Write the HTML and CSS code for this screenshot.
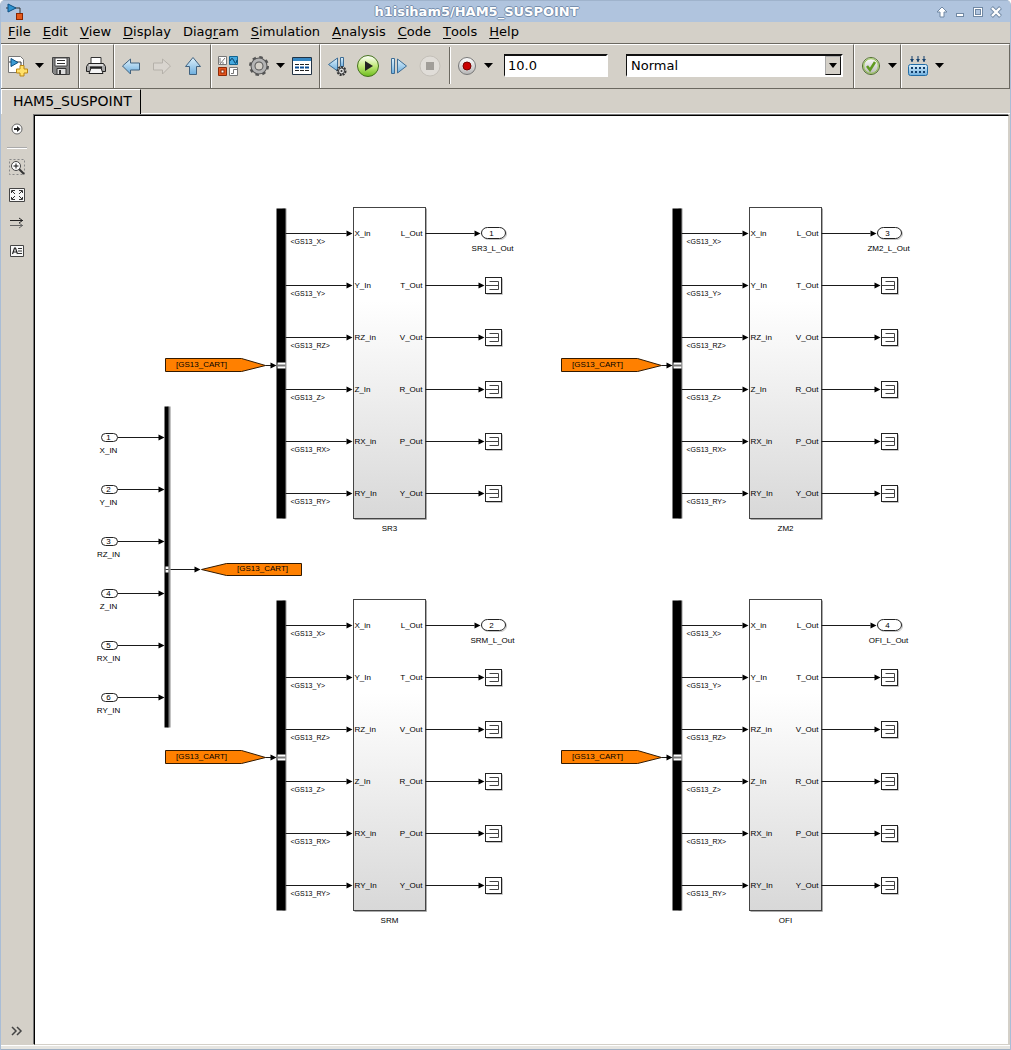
FILE: index.html
```html
<!DOCTYPE html>
<html lang="en">
<head>
<meta charset="utf-8">
<title>h1isiham5/HAM5_SUSPOINT</title>
<link rel="stylesheet" href="styles.css">
</head>
<body>
<div class="window">
  <header class="titlebar">
    <svg class="app-icon" width="18" height="18" viewBox="0 0 18 18" aria-hidden="true">
      <path d="M0 5h2M9 5h5v5" fill="none" stroke="#333"/>
      <path d="M2 1l8 4-8 4z" fill="#2f93d0" stroke="#0c4f82"/>
      <rect x="10.500" y="10.500" width="6" height="6" fill="#e35a1c" stroke="#8c2600"/>
    </svg>
    <h1 class="title">h1isiham5/HAM5_SUSPOINT</h1>
    <div class="controls">
      <button aria-label="Shade"><svg width="12" height="12" viewBox="0 0 12 12"><path d="M6 1l5 5H8v5H4V6H1z" fill="#fff" stroke="#7088a4"/></svg></button>
      <button aria-label="Minimize"><svg width="12" height="12" viewBox="0 0 12 12"><rect x="2.500" y="7.500" width="7" height="3" fill="#fff" stroke="#7088a4"/></svg></button>
      <button aria-label="Maximize"><svg width="12" height="12" viewBox="0 0 12 12"><rect x="1.500" y="1.500" width="9" height="9" fill="#fff" stroke="#7088a4"/><rect x="3.500" y="3.500" width="5" height="5" fill="#b0c4de" stroke="#7088a4"/></svg></button>
      <button aria-label="Close"><svg width="12" height="12" viewBox="0 0 12 12"><path d="M1.500 1.500l9 9M10.500 1.500l-9 9" stroke="#7088a4" stroke-width="4"/><path d="M2 2l8 8M10 2l-8 8" stroke="#fff" stroke-width="2.400"/></svg></button>
    </div>
  </header>

  <nav class="menubar">
    <button><u>F</u>ile</button>
    <button><u>E</u>dit</button>
    <button><u>V</u>iew</button>
    <button><u>D</u>isplay</button>
    <button>Diag<u>r</u>am</button>
    <button><u>S</u>imulation</button>
    <button><u>A</u>nalysis</button>
    <button><u>C</u>ode</button>
    <button><u>T</u>ools</button>
    <button><u>H</u>elp</button>
  </nav>

  <svg class="defs" width="0" height="0" aria-hidden="true">
    <defs>
      <linearGradient id="blue" x1="0" y1="0" x2="0" y2="1"><stop offset="0" stop-color="#dff1fb"/><stop offset="1" stop-color="#6daede"/></linearGradient>
      <linearGradient id="gray" x1="0" y1="0" x2="0" y2="1"><stop offset="0" stop-color="#fff"/><stop offset="1" stop-color="#b5b5b5"/></linearGradient>
      <linearGradient id="green" x1="0" y1="0" x2="0" y2="1"><stop offset="0" stop-color="#fff"/><stop offset=".5" stop-color="#c3ea7c"/><stop offset="1" stop-color="#6cbc1b"/></linearGradient>
      <linearGradient id="block" x1="0" y1="0" x2="0" y2="1"><stop offset="0" stop-color="#fff"/><stop offset=".3" stop-color="#fff"/><stop offset="1" stop-color="#d8d8d8"/></linearGradient>
      <path id="down" d="M1 1h9l-4.500 5z"/>
      <path id="head" d="M0 0l-6-3v6z"/>
      <g id="wires">
        <rect x="5" y="0" width="4" height="310" fill="#999"/>
        <rect x="-1" y="0" width="9" height="310"/>
        <path d="M0 154h8v6h-8z" fill="#fff"/><path d="M0 157h8" stroke="#777" stroke-width="2"/>
        <path d="M77 311h72V0" fill="none" stroke="#aaa"/>
        <rect x="76" y="-1" width="72" height="311" fill="url(#block)" stroke="#444"/>
        <path d="M8 25h61M8 77h61M8 129h61M8 181h61M8 233h61M8 285h61M-12 157h6M148 25h49M148 77h54M148 129h54M148 181h54M148 233h54M148 285h54" stroke="#1a1a1a"/>
        <use href="#head" x="75" y="25"/><use href="#head" x="75" y="77"/><use href="#head" x="75" y="129"/><use href="#head" x="75" y="181"/><use href="#head" x="75" y="233"/><use href="#head" x="75" y="285"/>
        <use href="#head" x="-1" y="157"/><use href="#head" x="203" y="25"/>
        <use href="#term" y="77"/><use href="#term" y="129"/><use href="#term" y="181"/><use href="#term" y="233"/><use href="#term" y="285"/>
        <rect x="205" y="20" width="24" height="11" rx="6" fill="none" stroke="#c4c4c4"/>
        <rect x="204" y="19" width="24" height="11" rx="6" fill="#fff" stroke="#222"/>
        <path d="M-112 150h76l24 7-24 6h-76z" fill="#ff8000" stroke="#331a00"/>
      </g>
      <g id="term">
        <use href="#head" x="207" y="0"/>
        <path d="M209 9h16v-16" fill="none" stroke="#c4c4c4"/>
        <rect x="208" y="-8" width="16" height="16" fill="#fff" stroke="#222"/>
        <path d="M212-4h9v8h-9M208 0h13" fill="none" stroke="#444"/>
      </g>
      <g id="inport">
        <path d="M16 0h42" stroke="#1a1a1a"/><use href="#head" x="63" y="0"/>
        <rect x="0" y="-4" width="16" height="8" rx="4" fill="#fff" stroke="#222"/>
      </g>
    </defs>
  </svg>

  <div class="toolbar" role="toolbar">
    <div class="group">
      <button class="tool" aria-label="New model"><svg width="22" height="22" viewBox="0 0 22 22"><path d="M1.500 1.500h12l3 3v13h-15z" fill="#fff" stroke="#777"/><path d="M2 7h12v3" stroke="#333" fill="none"/><path d="M4 3.500l7 4-7 4z" fill="#3c9bd3" stroke="#0c4f82"/><path d="M13 10.500h4v3.500h3.500v4H17v3h-4v-3H9.500v-4H13z" fill="#ffe069" stroke="#ba8615"/></svg></button>
      <button class="more" aria-label="New options"><svg width="11" height="7"><use href="#down"/></svg></button>
      <button class="tool" aria-label="Save"><svg width="20" height="20" viewBox="0 0 20 20"><path d="M1.500 1.500h17v17h-15l-2-2z" fill="#858585" stroke="#444"/><path d="M4 2h12v8H4z" fill="#fff" stroke="#444"/><path d="M6 4.500h8M6 7.500h8" stroke="#333"/><path d="M6 12.500h9v6H6z" fill="#ddd" stroke="#333"/><path d="M8 14h2v4H8z" fill="#333"/></svg></button>
    </div>
    <div class="group">
      <button class="tool" aria-label="Print"><svg width="22" height="20" viewBox="0 0 22 20"><path d="M6 8V1.500h10V8" fill="#fff" stroke="#333"/><path d="M3.500 7.500h15l2 3v5h-19v-5z" fill="#a9a9a9" stroke="#222"/><path d="M4 9h14" stroke="#ddd" stroke-width="2"/><path d="M6 12h10l2 5.500H4z" fill="#f5f5f5" stroke="#222"/><path d="M5 11.500h12" stroke="#222" stroke-width="2"/></svg></button>
    </div>
    <div class="group">
      <button class="tool" aria-label="Back"><svg width="20" height="18" viewBox="0 0 20 18"><path d="M1.500 9l8-7v4h9v7h-9v4z" fill="url(#blue)" stroke="#41627f"/></svg></button>
      <button class="tool" aria-label="Forward" disabled><svg width="20" height="18" viewBox="0 0 20 18"><path d="M18.500 9l-8-7v4h-9v7h9v4z" fill="#d9d5cf" stroke="#b5b1aa"/></svg></button>
      <button class="tool" aria-label="Up to parent"><svg width="18" height="20" viewBox="0 0 18 20"><path d="M9 1.500l7.500 9h-4v8h-7v-8h-4z" fill="url(#blue)" stroke="#41627f"/></svg></button>
    </div>
    <div class="group">
      <button class="tool" aria-label="Library browser"><svg width="22" height="22" viewBox="0 0 22 22"><path d="M1.500 1.500h8v8h-8zM12.500 12.500h8v8h-8z" fill="#fff" stroke="#777"/><path d="M3 9l5-6M3 3v5M6 7v2M14 18.500h2.500v-4H20" stroke="#777" fill="none"/><path d="M12.500 1.500h8v8h-8z" fill="#45a9df" stroke="#116491"/><path d="M13 6q2-5 4 0t3-1" fill="none" stroke="#063f64"/><path d="M1.500 12.500h8v8h-8z" fill="#e7561f" stroke="#8d2a08"/><rect x="4" y="15" width="3" height="3" fill="#fff" stroke="#8d2a08"/></svg></button>
      <button class="tool" aria-label="Model configuration"><svg width="22" height="22" viewBox="0 0 22 22"><circle cx="11" cy="11" r="8.500" fill="none" stroke="#555" stroke-width="3" stroke-dasharray="3.340"/><circle cx="11" cy="11" r="6" fill="#d4d0c8" stroke="#555" stroke-width="5"/><circle cx="11" cy="11" r="6" fill="none" stroke="#b4b4b4" stroke-width="3"/></svg></button>
      <button class="more" aria-label="Configuration options"><svg width="11" height="7"><use href="#down"/></svg></button>
      <button class="tool" aria-label="Model explorer"><svg width="20" height="18" viewBox="0 0 20 18"><path d="M.500.500h19v17H.500z" fill="#fff" stroke="#234"/><path d="M1 1h18v3H1z" fill="#3586c2"/><path d="M3 7.500h14M3 13.500h14" stroke="#222" stroke-dasharray="4 1"/><path d="M3 10.500h14" stroke="#0a4e96" stroke-width="2" stroke-dasharray="4 1"/></svg></button>
    </div>
    <div class="group">
      <button class="tool" aria-label="Step back"><svg width="20" height="20" viewBox="0 0 20 20"><path d="M10.500 2v13l-9-6.500z" fill="url(#blue)" stroke="#3d6c94"/><path d="M13.500 1.500h3v9h-3z" fill="url(#blue)" stroke="#3d6c94"/><circle cx="14.500" cy="15" r="4" fill="#ddd" stroke="#333" stroke-width="2" stroke-dasharray="2 1"/><circle cx="14.500" cy="15" r="3" fill="#ddd" stroke="#333"/><circle cx="14.500" cy="15" r="1" fill="#333"/></svg></button>
      <button class="tool" aria-label="Run"><svg width="24" height="24" viewBox="0 0 24 24"><circle cx="12" cy="12" r="10.500" fill="url(#green)" stroke="#44721c"/><path d="M9 7l8 5-8 5z" fill="#222"/></svg></button>
      <button class="tool" aria-label="Step forward"><svg width="18" height="18" viewBox="0 0 18 18"><path d="M1.500 1.500h3v15h-3zM7.500 2v14l9-7z" fill="url(#blue)" stroke="#3d6c94"/></svg></button>
      <button class="tool" aria-label="Stop" disabled><svg width="22" height="22" viewBox="0 0 22 22"><circle cx="11" cy="11" r="10" fill="#e0ddd8" stroke="#c4c0b9"/><path d="M7 7h8v8H7z" fill="#a19e99"/></svg></button>
      <span class="divider"></span>
      <button class="tool" aria-label="Record"><svg width="20" height="20" viewBox="0 0 20 20"><circle cx="10" cy="10" r="8.500" fill="url(#gray)" stroke="#777"/><circle cx="10" cy="10" r="4" fill="#c90000" stroke="#700"/></svg></button>
      <button class="more" aria-label="Record options"><svg width="11" height="7"><use href="#down"/></svg></button>
      <input class="stop-time" type="text" value="10.0" aria-label="Stop time">
      <div class="mode">
        <select aria-label="Simulation mode"><option>Normal</option></select>
        <span class="mode-arrow"><svg width="8" height="5" viewBox="0 0 8 5"><path d="M0 0h8l-4 5z"/></svg></span>
      </div>
    </div>
    <div class="group">
      <button class="tool" aria-label="Model advisor"><svg width="20" height="20" viewBox="0 0 20 20"><circle cx="10" cy="10" r="8.500" fill="url(#gray)" stroke="#4d6b2c"/><circle cx="10" cy="10" r="7.300" fill="none" stroke="#92c34a"/><path d="M6 10l3 4 5-8" fill="none" stroke="#5f9a20" stroke-width="2.500"/></svg></button>
      <button class="more" aria-label="Advisor options"><svg width="11" height="7"><use href="#down"/></svg></button>
    </div>
    <div class="group fill">
      <button class="tool" aria-label="Build model"><svg width="20" height="22" viewBox="0 0 20 22"><path d="M4 1v6M10 1v6M16 1v6" stroke="#123f6c"/><path d="M2 4h4L4 7zM8 4h4l-2 3zM14 4h4l-2 3z" fill="#123f6c"/><rect x=".500" y="9.500" width="19" height="11" rx="2" fill="url(#blue)" stroke="#216ca6"/><path d="M3 13h14M3 17h14" stroke="#123f6c" stroke-width="2" stroke-dasharray="2"/></svg></button>
      <button class="more" aria-label="Build options"><svg width="11" height="7"><use href="#down"/></svg></button>
    </div>
  </div>

  <div class="tabs" role="tablist"><button class="tab" role="tab" aria-selected="true">HAM5_SUSPOINT</button></div>

  <div class="workspace">
    <aside class="palette">
      <button aria-label="Hide browser"><svg width="12" height="12" viewBox="0 0 12 12"><circle cx="6" cy="6" r="5" fill="#fff" stroke="#666"/><path d="M3 6h4" stroke="#222" stroke-width="2"/><path d="M6 3l3.500 3L6 9z" fill="#222"/></svg></button>
      <span class="rule"></span>
      <button aria-label="Zoom"><svg width="16" height="16" viewBox="0 0 16 16"><path d="M.500.500h15v15H.500z" fill="none" stroke="#888" stroke-dasharray="2"/><path d="M10 10l5 5" stroke="#333" stroke-width="2"/><circle cx="7" cy="7" r="4.500" fill="#fff" stroke="#444"/><path d="M4.500 7h5M7 4.500v5" stroke="#111"/></svg></button>
      <button aria-label="Fit to view"><svg width="16" height="14" viewBox="0 0 16 14"><path d="M.500.500h15v13H.500z" fill="#f8f8f8" stroke="#444"/><path d="M2.500 5V2.500H6M10 2.500h3.500V5M2.500 9v2.500H6M10 11.500h3.500V9M3 3l3 3M13 3l-3 3M3 11l3-3M13 11l-3-3" fill="none" stroke="#333"/></svg></button>
      <button aria-label="Sample time"><svg width="16" height="12" viewBox="0 0 16 12"><path d="M1 3.500h13M10 1l3.500 2.500L10 6" fill="none" stroke="#222"/><path d="M1 8.500h13M10 6l3.500 2.500L10 11" fill="none" stroke="#666"/></svg></button>
      <button aria-label="Annotation"><svg width="14" height="12" viewBox="0 0 14 12"><path d="M.500.500h13v11H.500z" fill="#f8f8f8" stroke="#444"/><path d="M2.500 9l2-6h1l2 6M3.500 7h3" fill="none" stroke="#222" stroke-width="1.200"/><path d="M8 3.500h4M8 6h4M8 8.500h4" stroke="#333"/></svg></button>
      <button class="expand" aria-label="Expand palette"><svg width="12" height="10" viewBox="0 0 12 10"><path d="M1 1l4 4-4 4M6 1l4 4-4 4" fill="none" stroke="#444" stroke-width="1.500"/></svg></button>
    </aside>

    <main class="canvas">
      <svg class="diagram" width="900" height="820" role="img" aria-label="HAM5_SUSPOINT block diagram">
        <!-- input ports and bus creator -->
        <g transform="translate(66.500 321.500)">
          <use href="#inport" y="0"/><use href="#inport" y="52"/><use href="#inport" y="104"/><use href="#inport" y="156"/><use href="#inport" y="208"/><use href="#inport" y="260"/>
          <rect x="66" y="-31" width="3" height="321" fill="#888"/><rect x="63" y="-31" width="4" height="321"/>
          <path d="M64 129h3v6h-3z" fill="#fff"/><path d="M64 132h3" stroke="#333"/>
          <path d="M69 132h26" stroke="#1a1a1a"/><use href="#head" x="99" y="132"/>
          <path d="M100 132l25-6h75v12h-75z" fill="#ff8000" stroke="#331a00"/>
          <g class="mid"><text x="7" y="2">1</text><text x="7" y="15">X_IN</text>
          <text x="7" y="54">2</text><text x="7" y="67">Y_IN</text>
          <text x="7" y="106">3</text><text x="7" y="119">RZ_IN</text>
          <text x="7" y="158">4</text><text x="7" y="171">Z_IN</text>
          <text x="7" y="210">5</text><text x="7" y="223">RX_IN</text>
          <text x="7" y="262">6</text><text x="7" y="275">RY_IN</text>
          <text x="161" y="133">[GS13_CART]</text></g>
        </g>

        <!-- SR3 -->
        <g transform="translate(242.500 92.500)">
          <use href="#wires"/>
          <g class="signal"><text x="13" y="35">&lt;GS13_X&gt;</text><text x="13" y="87">&lt;GS13_Y&gt;</text><text x="13" y="139">&lt;GS13_RZ&gt;</text><text x="13" y="191">&lt;GS13_Z&gt;</text><text x="13" y="243">&lt;GS13_RX&gt;</text><text x="13" y="295">&lt;GS13_RY&gt;</text></g>
          <g><text x="77" y="27">X_in</text><text x="77" y="79">Y_In</text><text x="77" y="131">RZ_in</text><text x="77" y="183">Z_In</text><text x="77" y="235">RX_in</text><text x="77" y="287">RY_In</text></g>
          <g class="end"><text x="145" y="27">L_Out</text><text x="145" y="79">T_Out</text><text x="145" y="131">V_Out</text><text x="145" y="183">R_Out</text><text x="145" y="235">P_Out</text><text x="145" y="287">Y_Out</text></g>
          <g class="mid"><text x="-76" y="158">[GS13_CART]</text><text x="214" y="27">1</text><text x="215" y="42">SR3_L_Out</text><text x="112" y="322">SR3</text></g>
        </g>

        <!-- ZM2 -->
        <g transform="translate(638.500 92.500)">
          <use href="#wires"/>
          <g class="signal"><text x="13" y="35">&lt;GS13_X&gt;</text><text x="13" y="87">&lt;GS13_Y&gt;</text><text x="13" y="139">&lt;GS13_RZ&gt;</text><text x="13" y="191">&lt;GS13_Z&gt;</text><text x="13" y="243">&lt;GS13_RX&gt;</text><text x="13" y="295">&lt;GS13_RY&gt;</text></g>
          <g><text x="77" y="27">X_in</text><text x="77" y="79">Y_In</text><text x="77" y="131">RZ_in</text><text x="77" y="183">Z_In</text><text x="77" y="235">RX_in</text><text x="77" y="287">RY_In</text></g>
          <g class="end"><text x="145" y="27">L_Out</text><text x="145" y="79">T_Out</text><text x="145" y="131">V_Out</text><text x="145" y="183">R_Out</text><text x="145" y="235">P_Out</text><text x="145" y="287">Y_Out</text></g>
          <g class="mid"><text x="-76" y="158">[GS13_CART]</text><text x="214" y="27">3</text><text x="215" y="42">ZM2_L_Out</text><text x="112" y="322">ZM2</text></g>
        </g>

        <!-- SRM -->
        <g transform="translate(242.500 484.500)">
          <use href="#wires"/>
          <g class="signal"><text x="13" y="35">&lt;GS13_X&gt;</text><text x="13" y="87">&lt;GS13_Y&gt;</text><text x="13" y="139">&lt;GS13_RZ&gt;</text><text x="13" y="191">&lt;GS13_Z&gt;</text><text x="13" y="243">&lt;GS13_RX&gt;</text><text x="13" y="295">&lt;GS13_RY&gt;</text></g>
          <g><text x="77" y="27">X_in</text><text x="77" y="79">Y_In</text><text x="77" y="131">RZ_in</text><text x="77" y="183">Z_In</text><text x="77" y="235">RX_in</text><text x="77" y="287">RY_In</text></g>
          <g class="end"><text x="145" y="27">L_Out</text><text x="145" y="79">T_Out</text><text x="145" y="131">V_Out</text><text x="145" y="183">R_Out</text><text x="145" y="235">P_Out</text><text x="145" y="287">Y_Out</text></g>
          <g class="mid"><text x="-76" y="158">[GS13_CART]</text><text x="214" y="27">2</text><text x="215" y="42">SRM_L_Out</text><text x="112" y="322">SRM</text></g>
        </g>

        <!-- OFI -->
        <g transform="translate(638.500 484.500)">
          <use href="#wires"/>
          <g class="signal"><text x="13" y="35">&lt;GS13_X&gt;</text><text x="13" y="87">&lt;GS13_Y&gt;</text><text x="13" y="139">&lt;GS13_RZ&gt;</text><text x="13" y="191">&lt;GS13_Z&gt;</text><text x="13" y="243">&lt;GS13_RX&gt;</text><text x="13" y="295">&lt;GS13_RY&gt;</text></g>
          <g><text x="77" y="27">X_in</text><text x="77" y="79">Y_In</text><text x="77" y="131">RZ_in</text><text x="77" y="183">Z_In</text><text x="77" y="235">RX_in</text><text x="77" y="287">RY_In</text></g>
          <g class="end"><text x="145" y="27">L_Out</text><text x="145" y="79">T_Out</text><text x="145" y="131">V_Out</text><text x="145" y="183">R_Out</text><text x="145" y="235">P_Out</text><text x="145" y="287">Y_Out</text></g>
          <g class="mid"><text x="-76" y="158">[GS13_CART]</text><text x="214" y="27">4</text><text x="215" y="42">OFI_L_Out</text><text x="112" y="322">OFI</text></g>
        </g>
      </svg>
    </main>
  </div>
  <footer class="frame-bottom"></footer>
</div>
</body>
</html>
```
FILE: styles.css
```css
* {
  box-sizing: border-box;
}

body {
  margin: 0;
  background: #fff;
  color: #000;
  font: 13px/16px "DejaVu Sans", sans-serif;
}

button {
  display: flex;
  align-items: center;
  justify-content: center;
  margin: 0;
  padding: 0;
  border: 0;
  background: none;
  color: inherit;
  font: inherit;
}

svg {
  display: block;
  flex: none;
}

.defs {
  position: absolute;
}

.window {
  display: flex;
  flex-direction: column;
  min-height: 100vh;
  border: solid #a9bdd6;
  border-width: 0 1px;
  border-radius: 5px 5px 0 0;
  background: #d4d0c8;
  overflow: hidden;
}

.titlebar {
  display: flex;
  align-items: center;
  height: 22px;
  padding: 1px 5px 0;
  border-top: 1px solid #9fb3cc;
  background: #b0c4de;
}

.app-icon {
  margin-right: -4px;
}

.title {
  flex: 1;
  margin: 0;
  color: #fff;
  font-size: 13px;
  font-weight: bold;
  text-align: center;
  text-shadow: 1px 0 #7890ae, -1px 0 #7890ae, 0 1px #7890ae, 0 -1px #7890ae;
}

.controls {
  display: flex;
}

.controls button {
  width: 18px;
  height: 18px;
}

.menubar {
  display: flex;
  gap: 12px;
  height: 21px;
  padding: 0 7px 1px;
}

.menubar u {
  text-underline-offset: 2px;
}

.toolbar {
  display: flex;
  height: 46px;
  border: solid #6b6860;
  border-width: 1px 0;
}

.group {
  display: flex;
  align-items: center;
  padding: 0 2px 2px 0;
  border: solid #fff;
  border-width: 1px 1px 0;
  border-right-color: #6b6860;
}

.fill {
  flex: 1;
}

.tool {
  width: 31px;
  height: 32px;
}

.more {
  width: 12px;
  height: 32px;
}

.divider {
  width: 2px;
  height: 37px;
  margin: 0 0 0 4px;
  border-left: 1px solid #6b6860;
  background: #fff;
}

.stop-time,
.mode {
  height: 23px;
  border: solid;
  border-width: 2px 2px 2px 1px;
  border-color: #111 #fff #fff #111;
  background: #fff;
}

.stop-time {
  width: 104px;
  margin: 0 18px 0 10px;
  padding: 0 3px;
  border-radius: 0;
  font: inherit;
}

.mode {
  display: flex;
  width: 217px;
  margin-right: 8px;
}

.mode select {
  flex: 1;
  padding: 0 4px;
  border: 0;
  background: none;
  color: inherit;
  font: inherit;
  appearance: none;
}

.mode-arrow {
  display: flex;
  align-items: center;
  justify-content: center;
  width: 16px;
  border: 1px solid;
  border-color: #aaa #111 #111 #aaa;
  background: #d4d0c8;
  pointer-events: none;
}

.tabs {
  display: flex;
  height: 25px;
  border-bottom: 1px solid #fff;
}

.tab {
  height: 25px;
  padding: 0 8px 2px 11px;
  border: 1px solid #fff;
  border-right: 1px solid #000;
  border-bottom: 0;
  background: #d4d0c8;
  font-size: 14px;
}

.workspace {
  display: flex;
  flex: 1;
}

.palette {
  display: flex;
  flex-direction: column;
  align-items: center;
  width: 32px;
  padding-top: 1px;
}

.palette button {
  width: 28px;
  height: 28px;
}

.rule {
  width: 20px;
  height: 2px;
  margin: 4px 0;
  border-top: 1px solid #aaa;
  background: #fff;
}

.palette .expand {
  margin-top: auto;
}

.canvas {
  flex: 1;
  min-width: 0;
  margin: 1px 1px 0;
  border: 1px solid;
  border-color: #000 #d4d0c8 #d4d0c8 #000;
  background: #fff;
  box-shadow: -1px -1px #777;
}

.diagram {
  font: 8px "Liberation Sans", sans-serif;
}

.signal {
  font-size: 7px;
}

.mid {
  text-anchor: middle;
}

.end {
  text-anchor: end;
}

.frame-bottom {
  height: 5px;
  border: solid #fff;
  border-width: 1px 0;
  border-bottom-color: #9fb0c4;
  background: #e6e5e1;
}
```
